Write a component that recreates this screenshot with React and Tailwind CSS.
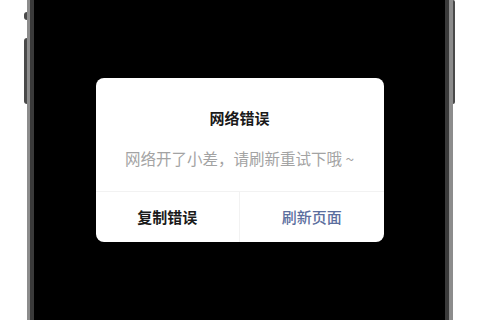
const App = () => {
  return (
    <div
      className="flex h-[320px] w-[480px] overflow-hidden bg-white"
      style={{ fontFamily: '"Noto Sans CJK SC", "Noto Sans", sans-serif' }}
    >
      {/* left side buttons */}
      <div className="ml-[24px] flex w-[3px] flex-col">
        <div className="mt-[12px] h-[8px] rounded-l-sm bg-[#4a4a4a]" />
        <div className="mt-[18px] h-[66px] rounded-l-sm bg-[#4a4a4a]" />
      </div>

      {/* phone frame */}
      <div className="flex w-[426px] bg-[#8c8c8c] pl-[3px] pr-[4px]">
        <div className="flex flex-1 bg-[#3a3a3a] px-[4px]">
          <div className="flex flex-1 items-center justify-center bg-black">
            <div className="w-[288px] overflow-hidden rounded-[8px] bg-white">
              <div className="px-4 pt-[30px] pb-[23px] text-center">
                <div className="text-[15px] leading-[20px] font-bold text-[#1a1a1a]">
                  网络错误
                </div>
                <div className="mt-[20px] text-[15.5px] leading-[20px] text-[#a3a3a3]">
                  网络开了小差，请刷新重试下哦 ~
                </div>
              </div>
              <div className="flex h-[51px] border-t border-[#f2f2f2]">
                <button className="flex flex-1 items-center justify-center border-r border-[#f2f2f2] text-[15px] font-bold text-[#1a1a1a]">
                  复制错误
                </button>
                <button className="flex flex-1 items-center justify-center text-[15px] font-medium text-[#5b6e9e]">
                  刷新页面
                </button>
              </div>
            </div>
          </div>
        </div>
      </div>

      {/* right side button */}
      <div className="w-[2px]">
        <div className="h-[104px] rounded-r-sm bg-[#4a4a4a]" />
      </div>
    </div>
  );
};

export default App;
